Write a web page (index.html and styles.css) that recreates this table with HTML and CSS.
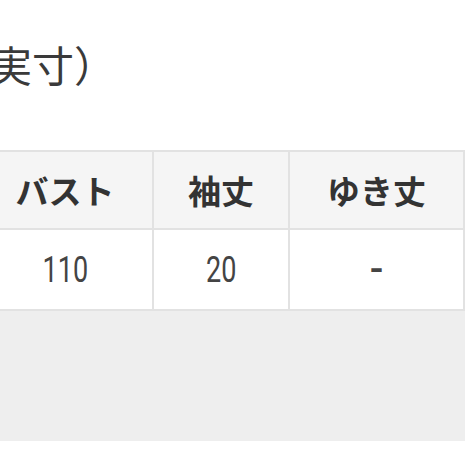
FILE: index.html
```html
<!DOCTYPE html>
<html lang="ja">
<head>
<meta charset="utf-8">
<title>サイズ（実寸）</title>
<link rel="stylesheet" href="styles.css">
</head>
<body>
<div class="page">
  <h2 class="title">（実寸）</h2>
  <table class="size-table">
    <thead>
      <tr>
        <th class="c1">バスト</th>
        <th class="c2">袖丈</th>
        <th class="c3">ゆき丈</th>
        <th class="c4"></th>
      </tr>
    </thead>
    <tbody>
      <tr>
        <td class="c1"><span class="num">110</span></td>
        <td class="c2"><span class="num">20</span></td>
        <td class="c3"><span class="dash">-</span></td>
        <td class="c4"></td>
      </tr>
    </tbody>
  </table>
  <div class="note"></div>
</div>
</body>
</html>
```

FILE: styles.css
```css
html, body {
  margin: 0;
  padding: 0;
  background: #ffffff;
  overflow: hidden;
}

.page {
  width: 465px;
  height: 465px;
  overflow: hidden;
  font-family: "Noto Sans CJK JP", "Noto Sans", sans-serif;
  color: #333333;
}

.title {
  margin: 43px 0 65px -52px;
  font-size: 42px;
  line-height: 42px;
  font-weight: 400;
  color: #3a3a3a;
  white-space: nowrap;
}

.size-table {
  margin-left: -24px;
  border-collapse: separate;
  border-spacing: 0;
  table-layout: fixed;
  width: 662px;
  border-top: 2px solid #e2e2e2;
  border-left: 2px solid #e2e2e2;
}

.size-table th,
.size-table td {
  box-sizing: border-box;
  padding: 0;
  text-align: center;
  vertical-align: middle;
  border-right: 2px solid #e2e2e2;
  border-bottom: 2px solid #e2e2e2;
  white-space: nowrap;
}

.size-table th {
  height: 78px;
  background: #f5f5f5;
  font-size: 33px;
  font-weight: 700;
  color: #333333;
}

.size-table td {
  height: 81px;
  background: #ffffff;
}

.c1 { width: 176px; }
.c2 { width: 136px; }
.c3 { width: 175px; }
.c4 { width: 175px; }

.num {
  display: inline-block;
  font-family: Roboto, "Liberation Sans", sans-serif;
  font-size: 36px;
  line-height: 36px;
  font-weight: 400;
  color: #444444;
  transform: scaleX(0.75);
}

.dash {
  display: inline-block;
  font-family: Roboto, "Liberation Sans", sans-serif;
  font-size: 40px;
  line-height: 36px;
  font-weight: 500;
  color: #444444;
  vertical-align: -4px;
}

.note {
  height: 130px;
  background: #eeeeee;
}
```
